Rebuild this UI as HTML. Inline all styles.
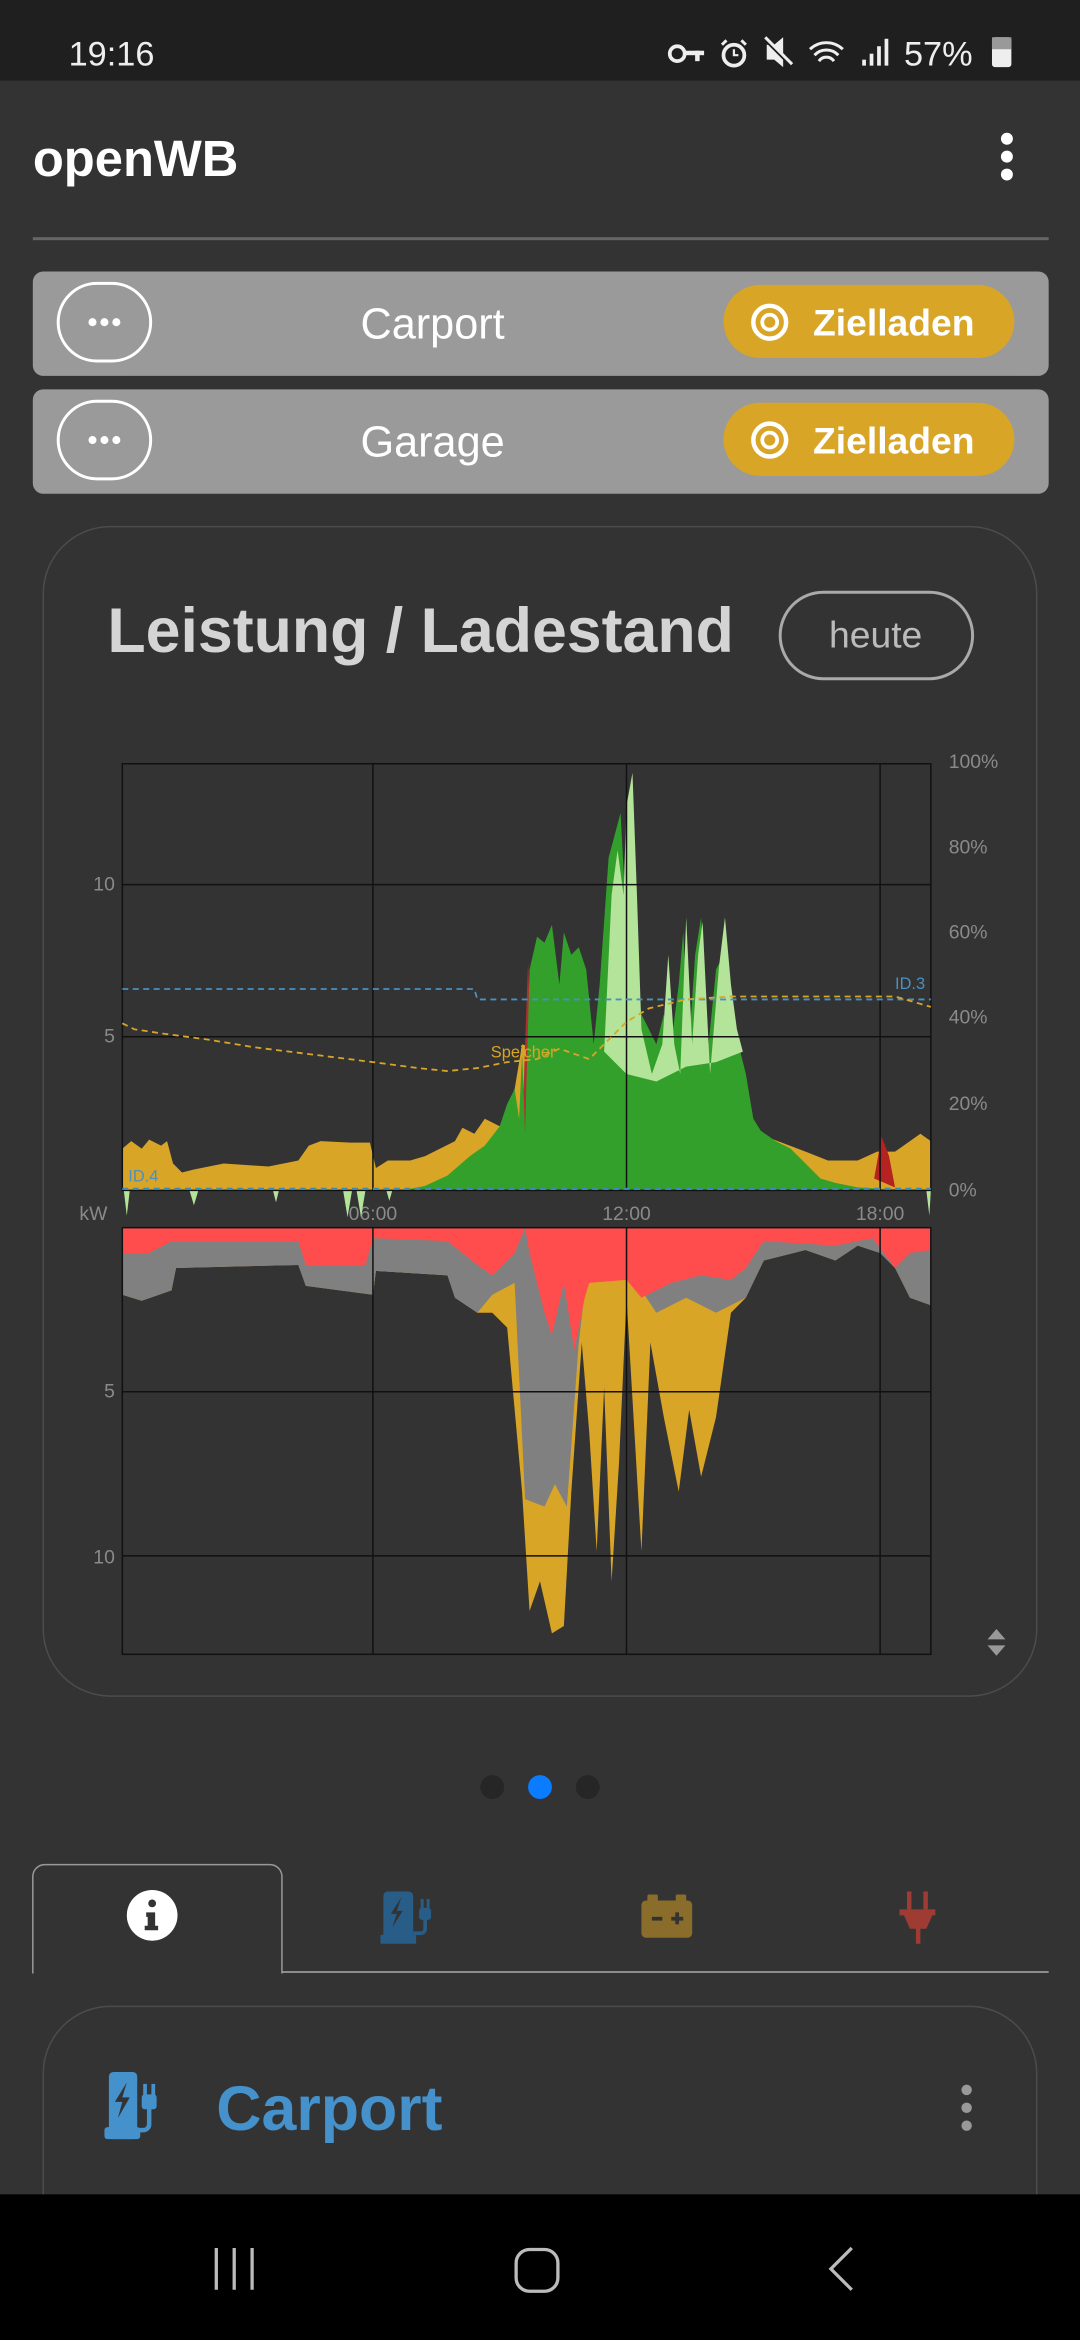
<!DOCTYPE html>
<html><head><meta charset="utf-8"><style>
html,body{margin:0;padding:0;background:#333;width:1080px;height:2340px;overflow:hidden}
svg{display:block}
text{font-family:"Liberation Sans",sans-serif}
</style></head><body>
<svg width="1080" height="2340" viewBox="0 0 724 1568.67" xmlns="http://www.w3.org/2000/svg">
<rect width="724" height="1568.67" fill="#333"/>
<!-- status bar -->
<rect width="724" height="54" fill="#1f1f1f"/>
<text x="46" y="44" font-size="23" fill="#eee">19:16</text>
<g fill="#eee">
<circle cx="454" cy="36" r="5" fill="none" stroke="#eee" stroke-width="2.5"/><rect x="458" y="34" width="14" height="3"/><rect x="466" y="34" width="3" height="7"/>
<circle cx="492" cy="37" r="7" fill="none" stroke="#eee" stroke-width="2.5"/><path d="M492 33v4h3" stroke="#eee" stroke-width="1.5" fill="none"/><path d="M484 30l3-3M500 30l-3-3" stroke="#eee" stroke-width="2"/>
<path d="M514 30h5l6-5v20l-6-5h-5z"/><path d="M513 26l18 18" stroke="#1f1f1f" stroke-width="3"/><path d="M513 25l18 18" stroke="#eee" stroke-width="2"/>
<path d="M543 33a16 16 0 0 1 22 0M546 37a11 11 0 0 1 16 0M549 41a6 6 0 0 1 10 0" stroke="#eee" stroke-width="2" fill="none"/>
<rect x="578" y="40" width="2.5" height="4"/><rect x="583" y="36" width="2.5" height="8"/><rect x="588" y="31" width="2.5" height="13"/><rect x="593" y="26" width="2.5" height="18"/>
</g>
<text x="606" y="44" font-size="23" fill="#eee">57%</text>
<rect x="665" y="25" width="13" height="20" rx="2" fill="#eee"/><rect x="665" y="25" width="13" height="8" fill="#999"/>
<!-- header -->
<text x="22" y="118" font-size="34" font-weight="bold" fill="#fff">openWB</text>
<circle cx="675" cy="93" r="4" fill="#fff"/><circle cx="675" cy="105" r="4" fill="#fff"/><circle cx="675" cy="117" r="4" fill="#fff"/>
<rect x="22" y="159" width="681" height="2" fill="#666"/>
<!-- bars -->
<g>
<rect x="22" y="182" width="681" height="70" rx="7" fill="#9a9a9a"/>
<rect x="39" y="190" width="62" height="52" rx="26" fill="none" stroke="#fff" stroke-width="2"/>
<circle cx="62" cy="216" r="2.7" fill="#fff"/><circle cx="70" cy="216" r="2.7" fill="#fff"/><circle cx="78" cy="216" r="2.7" fill="#fff"/>
<text x="290" y="227" font-size="29" fill="#fff" text-anchor="middle">Carport</text>
<rect x="485" y="191" width="195" height="49" rx="24.5" fill="#d9a526"/>
<circle cx="516" cy="216" r="11" fill="none" stroke="#fff" stroke-width="3"/><circle cx="516" cy="216" r="5" fill="none" stroke="#fff" stroke-width="2.5"/>
<text x="545" y="225" font-size="25" font-weight="bold" fill="#fff">Zielladen</text>
</g>
<g transform="translate(0,79)">
<rect x="22" y="182" width="681" height="70" rx="7" fill="#9a9a9a"/>
<rect x="39" y="190" width="62" height="52" rx="26" fill="none" stroke="#fff" stroke-width="2"/>
<circle cx="62" cy="216" r="2.7" fill="#fff"/><circle cx="70" cy="216" r="2.7" fill="#fff"/><circle cx="78" cy="216" r="2.7" fill="#fff"/>
<text x="290" y="227" font-size="29" fill="#fff" text-anchor="middle">Garage</text>
<rect x="485" y="191" width="195" height="49" rx="24.5" fill="#d9a526"/>
<circle cx="516" cy="216" r="11" fill="none" stroke="#fff" stroke-width="3"/><circle cx="516" cy="216" r="5" fill="none" stroke="#fff" stroke-width="2.5"/>
<text x="545" y="225" font-size="25" font-weight="bold" fill="#fff">Zielladen</text>
</g>
<!-- chart card -->
<rect x="29" y="353" width="666" height="784" rx="45" fill="#333" stroke="#4c4c4c" stroke-width="1"/>
<text x="72" y="437" font-size="42" font-weight="bold" fill="#d4d4d4">Leistung / Ladestand</text>
<rect x="523" y="397" width="129" height="58" rx="29" fill="none" stroke="#aaa" stroke-width="2"/>
<text x="587" y="434" font-size="25" fill="#bbb" text-anchor="middle">heute</text>
<!-- top chart -->
<g font-size="13" fill="#8a8a8a">
<text x="636" y="515">100%</text>
<text x="636" y="572">80%</text><text x="636" y="629">60%</text><text x="636" y="686">40%</text><text x="636" y="744">20%</text><text x="636" y="802">0%</text>
<text x="77" y="597" text-anchor="end">10</text><text x="77" y="699" text-anchor="end">5</text>
<text x="72" y="818" text-anchor="end">kW</text>
<text x="250" y="818" text-anchor="middle">06:00</text><text x="420" y="818" text-anchor="middle">12:00</text><text x="590" y="818" text-anchor="middle">18:00</text>
<text x="77" y="937" text-anchor="end">5</text><text x="77" y="1048" text-anchor="end">10</text>
</g>
<polygon fill="#d9a526" points="82,798 82,770 88,765 95,770 100,764 108,768 112,765 116,780 122,786 130,784 150,780 180,782 200,778 207,768 215,765 235,766 248,766 252,783 260,778 275,778 285,775 295,770 305,765 310,756 318,760 325,750 335,755 345,730 350,700 540,772 555,778 575,778 588,772 600,772 610,765 617,760 624,765 624,798"/>
<polygon fill="#b03030" points="350,760 352,700 354,645 356,700 356,760"/>
<polygon fill="#b52222" points="586,790 591,762 596,775 600,796"/>
<polygon fill="#33a02c" points="270,798 285,795 300,788 315,775 325,768 335,755 340,740 345,730 348,750 350,705 352,760 355,650 360,628 365,632 370,620 375,660 378,625 383,640 388,635 393,650 398,700 402,660 408,575 412,560 416,545 420,620 425,640 430,680 435,690 440,700 445,680 450,700 455,660 458,625 462,700 466,640 470,615 475,700 480,650 485,640 490,690 495,700 500,720 505,750 510,758 520,765 530,770 540,780 550,790 560,793 575,796 590,797 624,798"/>
<polygon fill="#b4e39a" points="405,705 410,600 414,570 418,600 420,540 424,518 427,600 430,690 437,720 444,700 448,640 452,700 456,720 460,615 464,700 468,640 471,618 476,720 482,648 486,615 490,660 494,690 498,705 480,712 460,715 440,725 420,720"/>
<g fill="#b4e39a"><polygon points="83,798 87,798 85,815"/><polygon points="127,798 133,798 130,808"/><polygon points="183,798 187,798 185,806"/><polygon points="230,798 236,798 233,816"/><polygon points="239,798 245,798 242,816"/><polygon points="259,798 263,798 261,805"/><polygon points="621,798 624,798 623,815"/></g>
<!-- grid -->
<g stroke="#111" stroke-width="1">
<line x1="82" y1="593" x2="624" y2="593"/><line x1="82" y1="695" x2="624" y2="695"/>
<line x1="250" y1="512" x2="250" y2="798"/><line x1="420" y1="512" x2="420" y2="798"/><line x1="590" y1="512" x2="590" y2="798"/>
<rect x="82" y="512" width="542" height="286" fill="none"/>
</g>
<polyline fill="none" stroke="#4a90c0" stroke-width="1.2" stroke-dasharray="4,3" points="82,663 318,663 320,670 600,670 624,670"/>
<line x1="82" y1="797" x2="624" y2="797" stroke="#3a8ab8" stroke-width="1.5" stroke-dasharray="4,3"/>
<polyline fill="none" stroke="#d9a526" stroke-width="1.2" stroke-dasharray="4,3" points="82,686 90,690 110,693 140,697 170,702 210,707 250,712 280,716 300,718 320,716 340,712 360,710 375,703 395,710 405,700 420,685 435,676 460,670 490,668 600,668 624,675"/>
<text x="329" y="709" font-size="11" fill="#d9a526">Speicher</text>
<text x="600" y="663" font-size="11" fill="#4a90c0">ID.3</text>
<text x="86" y="792" font-size="11" fill="#4a90c0">ID.4</text>
<!-- bottom chart -->
<polygon fill="#d9a526" points="82,823 82,868 95,872 115,865 118,850 200,848 205,862 250,868 252,852 300,855 305,870 320,880 330,880 340,890 350,1000 355,1080 362,1060 370,1095 378,1090 383,1000 390,900 395,960 400,1040 405,930 410,1060 415,980 420,870 430,1040 436,900 445,950 455,1000 462,945 470,990 480,950 490,880 500,870 512,845 540,838 560,845 575,835 590,840 600,850 610,870 624,875 624,823"/>
<polygon fill="#808080" points="82,823 82,868 95,872 115,865 118,850 200,848 205,862 250,868 252,852 300,855 305,870 320,880 330,868 345,860 352,1005 365,1010 372,995 380,1010 388,900 395,840 420,850 440,880 460,870 480,880 500,870 512,845 540,838 560,845 575,835 590,840 600,850 610,870 624,875 624,823"/>
<polygon fill="#ff4d4d" points="82,823 82,840 100,840 115,832 200,832 205,848 245,848 250,830 300,832 320,848 330,855 345,840 352,823 355,840 365,880 370,895 378,860 385,905 392,870 395,860 420,858 430,870 450,860 470,855 490,858 500,850 512,832 560,835 585,830 600,850 610,840 624,838 624,823"/>
<g stroke="#111" stroke-width="1">
<line x1="82" y1="933" x2="624" y2="933"/><line x1="82" y1="1043" x2="624" y2="1043"/>
<line x1="250" y1="823" x2="250" y2="1109"/><line x1="420" y1="823" x2="420" y2="1109"/><line x1="590" y1="823" x2="590" y2="1109"/>
<rect x="82" y="823" width="542" height="286" fill="none"/>
</g>
<polygon points="662,1099 674,1099 668,1092" fill="#999"/><polygon points="662,1103 674,1103 668,1110" fill="#999"/>
<!-- dots -->
<circle cx="330" cy="1198" r="8" fill="#262626"/><circle cx="362" cy="1198" r="8" fill="#0a7cff"/><circle cx="394" cy="1198" r="8" fill="#262626"/>
<!-- tabs -->
<path d="M22 1323V1258a8 8 0 0 1 8-8h151a8 8 0 0 1 8 8v65" fill="#333" stroke="#999" stroke-width="1"/>
<line x1="189" y1="1322" x2="703" y2="1322" stroke="#aaa" stroke-width="1"/>
<circle cx="102" cy="1284" r="17" fill="#fff"/>
<circle cx="102" cy="1276" r="2.6" fill="#333"/><path d="M98 1282h6v9h2v3h-9v-3h2v-6h-1z" fill="#333"/>
<g fill="#285d87">
<rect x="257" y="1268" width="20" height="34" rx="3"/><rect x="255" y="1297" width="24" height="6" rx="1"/>
<path d="M269 1272l-7 11h4l-3 9 7-11h-4z" fill="#333"/>
<path d="M277 1296h5a3 3 0 0 0 3-3v-7" stroke="#285d87" stroke-width="2.5" fill="none"/>
<rect x="281" y="1279" width="8" height="8" rx="2"/><rect x="282" y="1273" width="2" height="7"/><rect x="286" y="1273" width="2" height="7"/>
</g>
<g fill="#8a6d2a">
<rect x="430" y="1274" width="34" height="25" rx="3"/><rect x="434" y="1270" width="7" height="6" rx="1"/><rect x="453" y="1270" width="7" height="6" rx="1"/>
<rect x="437" y="1285" width="7" height="2.5" fill="#333"/><rect x="450" y="1285" width="8" height="2.5" fill="#333"/><rect x="452.7" y="1282" width="2.5" height="8" fill="#333"/>
</g>
<g fill="#9e3c33">
<rect x="608" y="1268" width="3" height="12"/><rect x="619" y="1268" width="3" height="12"/>
<path d="M603 1280h24v4h-2l-4 9h-4v10h-3v-10h-4l-4-9h-3z"/>
</g>
<!-- card 2 -->
<path d="M29 1475V1390a45 45 0 0 1 45-45h576a45 45 0 0 1 45 45v85" fill="#333" stroke="#4c4c4c" stroke-width="1"/>
<g fill="#4591cc">
<rect x="73" y="1389" width="19" height="45" rx="3"/><rect x="70" y="1426" width="24" height="8" rx="2"/>
<path d="M85 1396l-8 13h5l-3 11 8-14h-5z" fill="#333"/>
<path d="M92 1428h4a4 4 0 0 0 4-4v-12" stroke="#4591cc" stroke-width="3" fill="none"/>
<rect x="95" y="1404" width="10" height="10" rx="2"/><rect x="96" y="1397" width="2.5" height="8"/><rect x="101.5" y="1397" width="2.5" height="8"/>
</g>
<text x="145" y="1428" font-size="42" font-weight="bold" fill="#4591cc">Carport</text>
<circle cx="648" cy="1401" r="3.5" fill="#999"/><circle cx="648" cy="1413" r="3.5" fill="#999"/><circle cx="648" cy="1425" r="3.5" fill="#999"/>
<!-- nav -->
<rect x="0" y="1471" width="724" height="98" fill="#000"/>
<g stroke="#bbb" stroke-width="2.2" fill="none">
<line x1="145" y1="1507" x2="145" y2="1535"/><line x1="157" y1="1507" x2="157" y2="1535"/><line x1="169" y1="1507" x2="169" y2="1535"/>
<rect x="346" y="1508" width="28" height="28" rx="9"/>
<polyline points="571,1507 557,1521 571,1535"/>
</g>
</svg>
</body></html>
